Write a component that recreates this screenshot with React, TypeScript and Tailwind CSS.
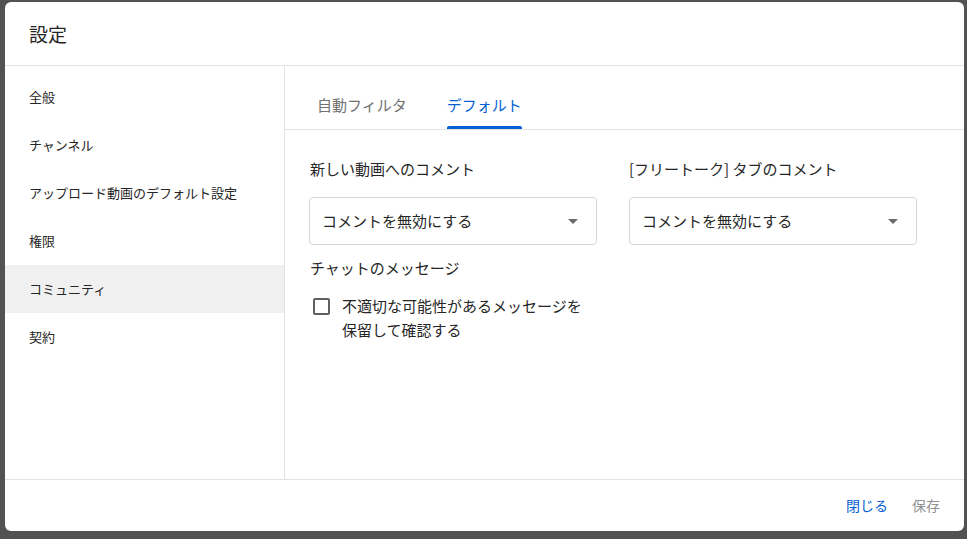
import { useState } from "react";

const font = { fontFamily: '"Noto Sans CJK JP", "Noto Sans", sans-serif' };

const navItems = ["全般", "チャンネル", "アップロード動画のデフォルト設定", "権限", "コミュニティ", "契約"];

function Select({ value }: { value: string }) {
  return (
    <div className="flex items-center justify-between w-[288px] h-[48px] border border-[#d6d6d6] rounded-[4px] pl-[12px] pr-[18px]">
      <span className="text-[15px] text-[#262626]">{value}</span>
      <svg width="10" height="5" viewBox="0 0 10 5">
        <path d="M0 0 L10 0 L5 5 Z" fill="#6b6b6b" />
      </svg>
    </div>
  );
}

export default function App() {
  const [active, setActive] = useState("コミュニティ");
  const [tab, setTab] = useState("デフォルト");
  const [hold, setHold] = useState(false);

  return (
    <div className="w-[967px] h-[539px] bg-[#525252] pt-[2px] pl-[5px]" style={font}>
      <div className="w-[959px] h-[529px] bg-white rounded-[6px] flex flex-col overflow-hidden">

        {/* Header */}
        <div className="h-[64px] shrink-0 flex items-center px-[24px] pt-[2px] border-b border-[#e3e3e3]">
          <h1 className="text-[19px] text-[#262626] font-normal">設定</h1>
        </div>

        {/* Body */}
        <div className="flex flex-1 min-h-0 border-b border-[#e3e3e3]">
          <div className="w-[280px] shrink-0 border-r border-[#e3e3e3] pt-[7px]">
            {navItems.map((item) => (
              <div
                key={item}
                onClick={() => setActive(item)}
                className={
                  "h-[48px] flex items-center pl-[24px] text-[13px] text-[#262626] cursor-pointer " +
                  (active === item ? "bg-[#f0f0f0]" : "")
                }
              >
                {item}
              </div>
            ))}
          </div>

          <div className="flex-1 flex flex-col">
            {/* Tabs */}
            <div className="h-[64px] shrink-0 flex items-end pl-[32px] border-b border-[#e3e3e3] gap-[40px]">
              {["自動フィルタ", "デフォルト"].map((t) => (
                <div
                  key={t}
                  onClick={() => setTab(t)}
                  className={
                    "h-[63px] flex flex-col justify-between cursor-pointer text-[15px] " +
                    (tab === t ? "text-[#065fd4]" : "text-[#707070]")
                  }
                >
                  <span className="pt-[28px] leading-[22px]">{t}</span>
                  <span className={"h-[3px] rounded-t-[2px] " + (tab === t ? "bg-[#065fd4]" : "bg-transparent")} />
                </div>
              ))}
            </div>

            {/* Content */}
            <div className="pl-[24px] pt-[27px]">
              <div className="flex gap-[32px]">
                <div>
                  <div className="text-[15px] text-[#262626] leading-[24px] mb-[16px] pl-[1px]">新しい動画へのコメント</div>
                  <Select value="コメントを無効にする" />
                </div>
                <div>
                  <div className="text-[15px] text-[#262626] leading-[24px] mb-[16px]">[フリートーク] タブのコメント</div>
                  <Select value="コメントを無効にする" />
                </div>
              </div>
              <div className="text-[15px] text-[#262626] leading-[24px] mt-[11px] pl-[1px]">チャットのメッセージ</div>
              <div className="flex items-start mt-[14px] pl-[4px] cursor-pointer" onClick={() => setHold(!hold)}>
                <div className="w-[17px] h-[17px] border-2 border-[#606060] rounded-[2px] mt-[4px] shrink-0 flex items-center justify-center">
                  {hold && (
                    <svg width="12" height="12" viewBox="0 0 12 12">
                      <path d="M2 6 L5 9 L10 3" stroke="#606060" strokeWidth="2" fill="none" />
                    </svg>
                  )}
                </div>
                <div className="ml-[12px] text-[15px] text-[#262626] leading-[24px]">
                  不適切な可能性があるメッセージを
                  <br />
                  保留して確認する
                </div>
              </div>
            </div>
          </div>
        </div>

        {/* Footer */}
        <div className="h-[51px] shrink-0 flex items-center justify-end pr-[24px] gap-[24px]">
          <button className="text-[14px] text-[#065fd4] bg-transparent cursor-pointer">閉じる</button>
          <button className="text-[14px] text-[#909090] bg-transparent cursor-pointer">保存</button>
        </div>
      </div>
    </div>
  );
}
